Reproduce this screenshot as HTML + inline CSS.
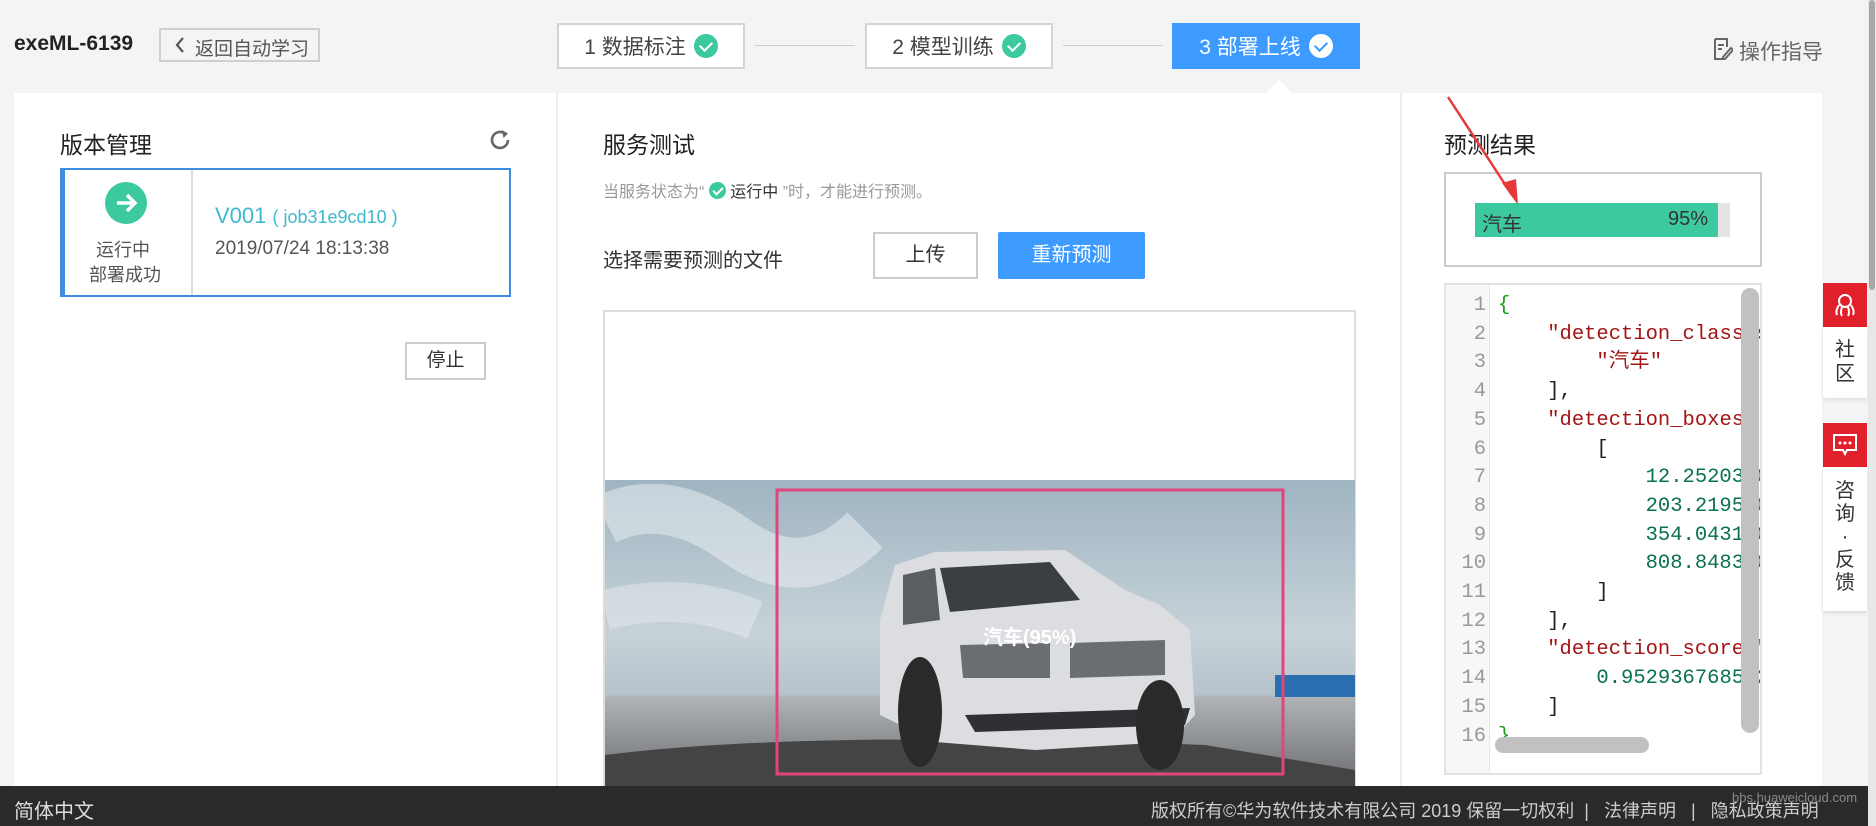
<!DOCTYPE html>
<html><head><meta charset="utf-8"><style>
*{margin:0;padding:0;box-sizing:border-box}
body{width:1876px;height:826px;overflow:hidden;background:#f3f4f6;font-family:"Liberation Sans","Noto Sans CJK SC",sans-serif;color:#333;position:relative}
.a{position:absolute;white-space:nowrap}
.step{position:absolute;top:23px;height:46px;border:2px solid #d4d4d4;background:#fff;font-size:21px;color:#444;display:flex;align-items:center;justify-content:center;gap:8px}
.ck{width:24px;height:24px;border-radius:50%;background:#3dc9a0;display:inline-block;position:relative}
.ck:after{content:"";position:absolute;left:8px;top:5px;width:6px;height:10px;border:solid #fff;border-width:0 2px 2px 0;transform:rotate(45deg)}
.ckw:after{border-color:#3d9bff}
.cks{width:17px;height:17px;vertical-align:-2px}
.cks:after{left:6px;top:3px;width:4px;height:8px}
.code{font-family:"Liberation Mono","Noto Sans CJK SC",monospace;font-size:20.5px;line-height:28.7px}
.s{color:#a31515}.n{color:#09714f}.g{color:#1a9b1a}
</style></head><body>
<div class="a" style="left:14px;top:32px;font-size:21px;font-weight:bold;color:#222">exeML-6139</div>
<div class="a" style="left:159px;top:28px;width:161px;height:34px;border:2px solid #cfcfcf;font-size:19px;color:#555;padding:4px 0 0 34px">返回自动学习</div>
<svg class="a" style="left:174px;top:36px" width="12" height="18"><path d="M9 2 L3 9 L9 16" stroke="#555" stroke-width="2.2" fill="none"/></svg>
<div class="step" style="left:557px;width:188px">1 数据标注 <span class="ck"></span></div>
<div class="a" style="left:755px;top:45px;width:100px;height:1px;background:#ccc"></div>
<div class="step" style="left:865px;width:188px">2 模型训练 <span class="ck"></span></div>
<div class="a" style="left:1063px;top:45px;width:100px;height:1px;background:#ccc"></div>
<div class="step" style="left:1172px;width:188px;background:#3d9bff;border-color:#3d9bff;color:#fff">3 部署上线 <span class="ck ckw" style="background:#fff"></span></div>
<div class="a" style="left:1265px;top:80px;width:0;height:0;border:14px solid transparent;border-bottom-color:#fff;border-top:0"></div>
<svg class="a" style="left:1713px;top:37px" width="20" height="24"><path d="M2 2h12v8M2 2v20h8" stroke="#666" stroke-width="2" fill="none"/><path d="M5 8h6M5 12h4M10 20l8-9 2 2-8 9h-2z" stroke="#666" stroke-width="2" fill="none"/></svg>
<div class="a" style="left:1739px;top:36px;font-size:21px;color:#666">操作指导</div>

<div class="a" style="left:14px;top:93px;width:1808px;height:693px;background:#fff"></div>
<div class="a" style="left:556px;top:93px;width:2px;height:693px;background:#ececec"></div>
<div class="a" style="left:1400px;top:93px;width:2px;height:693px;background:#ececec"></div>

<div class="a" style="left:60px;top:126px;font-size:23px;color:#222">版本管理</div>
<svg class="a" style="left:487px;top:127px" width="26" height="26"><path d="M21 13a8 8 0 1 1-3-6.3" stroke="#666" stroke-width="2.6" fill="none"/><path d="M15 3l6 3.5-4.5 4.5z" fill="#666"/></svg>
<div class="a" style="left:60px;top:168px;width:451px;height:129px;border:2px solid #3d8ee0;border-left:5px solid #3d8ee0"></div>
<div class="a" style="left:191px;top:170px;width:2px;height:125px;background:#ddd"></div>
<div class="a" style="left:105px;top:182px;width:42px;height:42px;border-radius:50%;background:#3dc9a0"></div>
<svg class="a" style="left:105px;top:182px" width="42" height="42"><path d="M12 21h17M22 13l8 8-8 8" stroke="#fff" stroke-width="3.5" fill="none"/></svg>
<div class="a" style="left:96px;top:236px;font-size:18px;color:#555">运行中</div>
<div class="a" style="left:89px;top:261px;font-size:18px;color:#555">部署成功</div>
<div class="a" style="left:215px;top:203px;font-size:22px;color:#3cb8d0">V001 <span style="font-size:18px">( job31e9cd10 )</span></div>
<div class="a" style="left:215px;top:238px;font-size:19px;color:#555">2019/07/24 18:13:38</div>
<div class="a" style="left:405px;top:342px;width:81px;height:38px;border:2px solid #ccc;font-size:19px;color:#333;text-align:center;line-height:34px">停止</div>

<div class="a" style="left:603px;top:126px;font-size:23px;color:#222">服务测试</div>
<div class="a" style="left:603px;top:178px;font-size:16px;color:#999">当服务状态为“ <span class="ck cks"></span> <span style="color:#333">运行中</span> ”时，才能进行预测。</div>
<div class="a" style="left:603px;top:244px;font-size:20px;color:#333">选择需要预测的文件</div>
<div class="a" style="left:873px;top:232px;width:105px;height:47px;border:2px solid #ccc;font-size:20px;text-align:center;line-height:43px;color:#333">上传</div>
<div class="a" style="left:998px;top:232px;width:147px;height:47px;background:#3d9bff;font-size:20px;text-align:center;line-height:47px;color:#fff;border-radius:2px">重新预测</div>
<div class="a" style="left:603px;top:310px;width:753px;height:476px;border:2px solid #ddd;border-bottom:0"></div>
<svg class="a" style="left:605px;top:480px" width="750" height="306">
<defs><linearGradient id="sky" x1="0" y1="0" x2="0" y2="1"><stop offset="0" stop-color="#9fb4c2"/><stop offset=".5" stop-color="#c7d2d8"/><stop offset=".7" stop-color="#b6c3cb"/><stop offset=".71" stop-color="#b0b3b6"/><stop offset="1" stop-color="#6a6c70"/></linearGradient></defs>
<rect width="750" height="306" fill="url(#sky)"/>
<path d="M0 40 Q60 10 130 60 T260 50" stroke="#eef2f4" stroke-width="50" fill="none" opacity=".5"/>
<path d="M0 130 Q80 110 150 140" stroke="#eef2f4" stroke-width="40" fill="none" opacity=".4"/>
<rect x="670" y="195" width="80" height="22" fill="#2a6fb0"/>
<path d="M0 306 L0 275 Q200 250 600 265 L750 290 L750 306z" fill="#444"/>
<path d="M275 140 L290 85 L330 72 L460 70 L520 110 L555 125 L585 150 L590 235 L565 262 L430 270 L330 262 L275 235z" fill="#dcdde0"/>
<path d="M335 88 L445 82 L475 120 L345 132z" fill="#3b3e42"/>
<path d="M298 95 L330 88 L335 140 L298 145z" fill="#5a5d62"/>
<path d="M355 165 L445 163 L445 198 L358 198z M465 163 L560 160 L560 195 L465 198z" fill="#6a6d72"/>
<path d="M360 235 L585 228 L580 245 L370 252z" fill="#2e3034"/>
<ellipse cx="315" cy="232" rx="22" ry="55" fill="#2a2a2a"/><ellipse cx="555" cy="245" rx="24" ry="45" fill="#2a2a2a"/>
<rect x="172" y="10" width="506" height="284" fill="none" stroke="#e0457b" stroke-width="3"/>
</svg>
<div class="a" style="left:983px;top:621px;font-size:20px;color:#fff;font-weight:bold">汽车(95%)</div>

<div class="a" style="left:1444px;top:126px;font-size:23px;color:#222">预测结果</div>
<div class="a" style="left:1444px;top:172px;width:318px;height:95px;border:2px solid #ccc"></div>
<div class="a" style="left:1475px;top:203px;width:255px;height:34px;background:#e4e4e4"></div>
<div class="a" style="left:1475px;top:203px;width:243px;height:34px;background:#3dc9a0"></div>
<div class="a" style="left:1482px;top:208px;font-size:20px;color:#333">汽车</div>
<div class="a" style="left:1668px;top:208px;font-size:20px;color:#333">95%</div>
<div class="a" style="left:1444px;top:283px;width:318px;height:492px;border:2px solid #e3e3e3;overflow:hidden;background:#fff">
<div class="a" style="left:0;top:0;width:44px;height:490px;background:#f7f7f7;border-right:1px solid #e6e6e6"></div>
<div class="a code" style="left:0;top:7px;width:40px;text-align:right;color:#999">1<br>2<br>3<br>4<br>5<br>6<br>7<br>8<br>9<br>10<br>11<br>12<br>13<br>14<br>15<br>16</div>
<pre class="a code" style="left:52px;top:7px;color:#222;white-space:pre"><span class="g">{</span>
    <span class="s">"detection_classes"</span>
        <span class="s">"汽车"</span>
    ],
    <span class="s">"detection_boxes"</span>
        [
            <span class="n">12.25203800</span>
            <span class="n">203.2195200</span>
            <span class="n">354.0431500</span>
            <span class="n">808.8483200</span>
        ]
    ],
    <span class="s">"detection_scores"</span>
        <span class="n">0.952936768532</span>
    ]
<span class="g">}</span></pre>
</div>
<div class="a" style="left:1760px;top:283px;width:2px;height:492px;background:#e3e3e3"></div>
<div class="a" style="left:1741px;top:288px;width:18px;height:445px;border-radius:9px;background:#c1c1c1"></div>
<div class="a" style="left:1495px;top:737px;width:154px;height:16px;border-radius:8px;background:#c1c1c1"></div>
<svg class="a" style="left:1440px;top:95px" width="90" height="115"><path d="M8 2 L72 100" stroke="#e53a3a" stroke-width="2.5"/><path d="M62 88 L78 110 L76 84z" fill="#e53a3a"/></svg>

<div class="a" style="left:1823px;top:283px;width:44px;height:44px;background:#e0202a"></div>
<svg class="a" style="left:1831px;top:291px" width="28" height="28"><circle cx="14" cy="10" r="6" stroke="#fff" stroke-width="2" fill="none"/><path d="M8 14 Q4 20 6 24 M11 16 Q9 22 11 25 M17 16 Q19 22 17 25 M20 14 Q24 20 22 24" stroke="#fff" stroke-width="2" fill="none"/></svg>
<div class="a" style="left:1823px;top:327px;width:44px;height:71px;background:#fff;box-shadow:0 2px 4px rgba(0,0,0,.1);font-size:20px;text-align:center;line-height:24px;white-space:normal;padding-top:11px">社<br>区</div>
<div class="a" style="left:1823px;top:423px;width:44px;height:44px;background:#e0202a"></div>
<svg class="a" style="left:1831px;top:431px" width="28" height="28"><path d="M3 4h22v15h-9l-2 4-2-4H3z" stroke="#fff" stroke-width="2" fill="none"/><circle cx="9" cy="12" r="1.5" fill="#fff"/><circle cx="14" cy="12" r="1.5" fill="#fff"/><circle cx="19" cy="12" r="1.5" fill="#fff"/></svg>
<div class="a" style="left:1823px;top:467px;width:44px;height:144px;background:#fff;box-shadow:0 2px 4px rgba(0,0,0,.1);font-size:20px;text-align:center;line-height:23px;white-space:normal;padding-top:13px">咨<br>询<br>·<br>反<br>馈</div>
<div class="a" style="left:1868px;top:0;width:8px;height:826px;background:#e8e8e8"></div>
<div class="a" style="left:1869px;top:0;width:6px;height:290px;background:#a8a8a8;border-radius:3px"></div>

<div class="a" style="left:0;top:786px;width:1868px;height:40px;background:#2a2a2a"></div>
<div class="a" style="left:14px;top:795px;font-size:20px;color:#ddd">简体中文</div>
<div class="a" style="left:1151px;top:797px;font-size:18px;color:#ccc">版权所有©华为软件技术有限公司 2019 保留一切权利 &nbsp;| &nbsp; 法律声明 &nbsp; | &nbsp; 隐私政策声明</div>
<div class="a" style="left:1732px;top:790px;font-size:13px;color:#888">bbs.huaweicloud.com</div>
</body></html>
